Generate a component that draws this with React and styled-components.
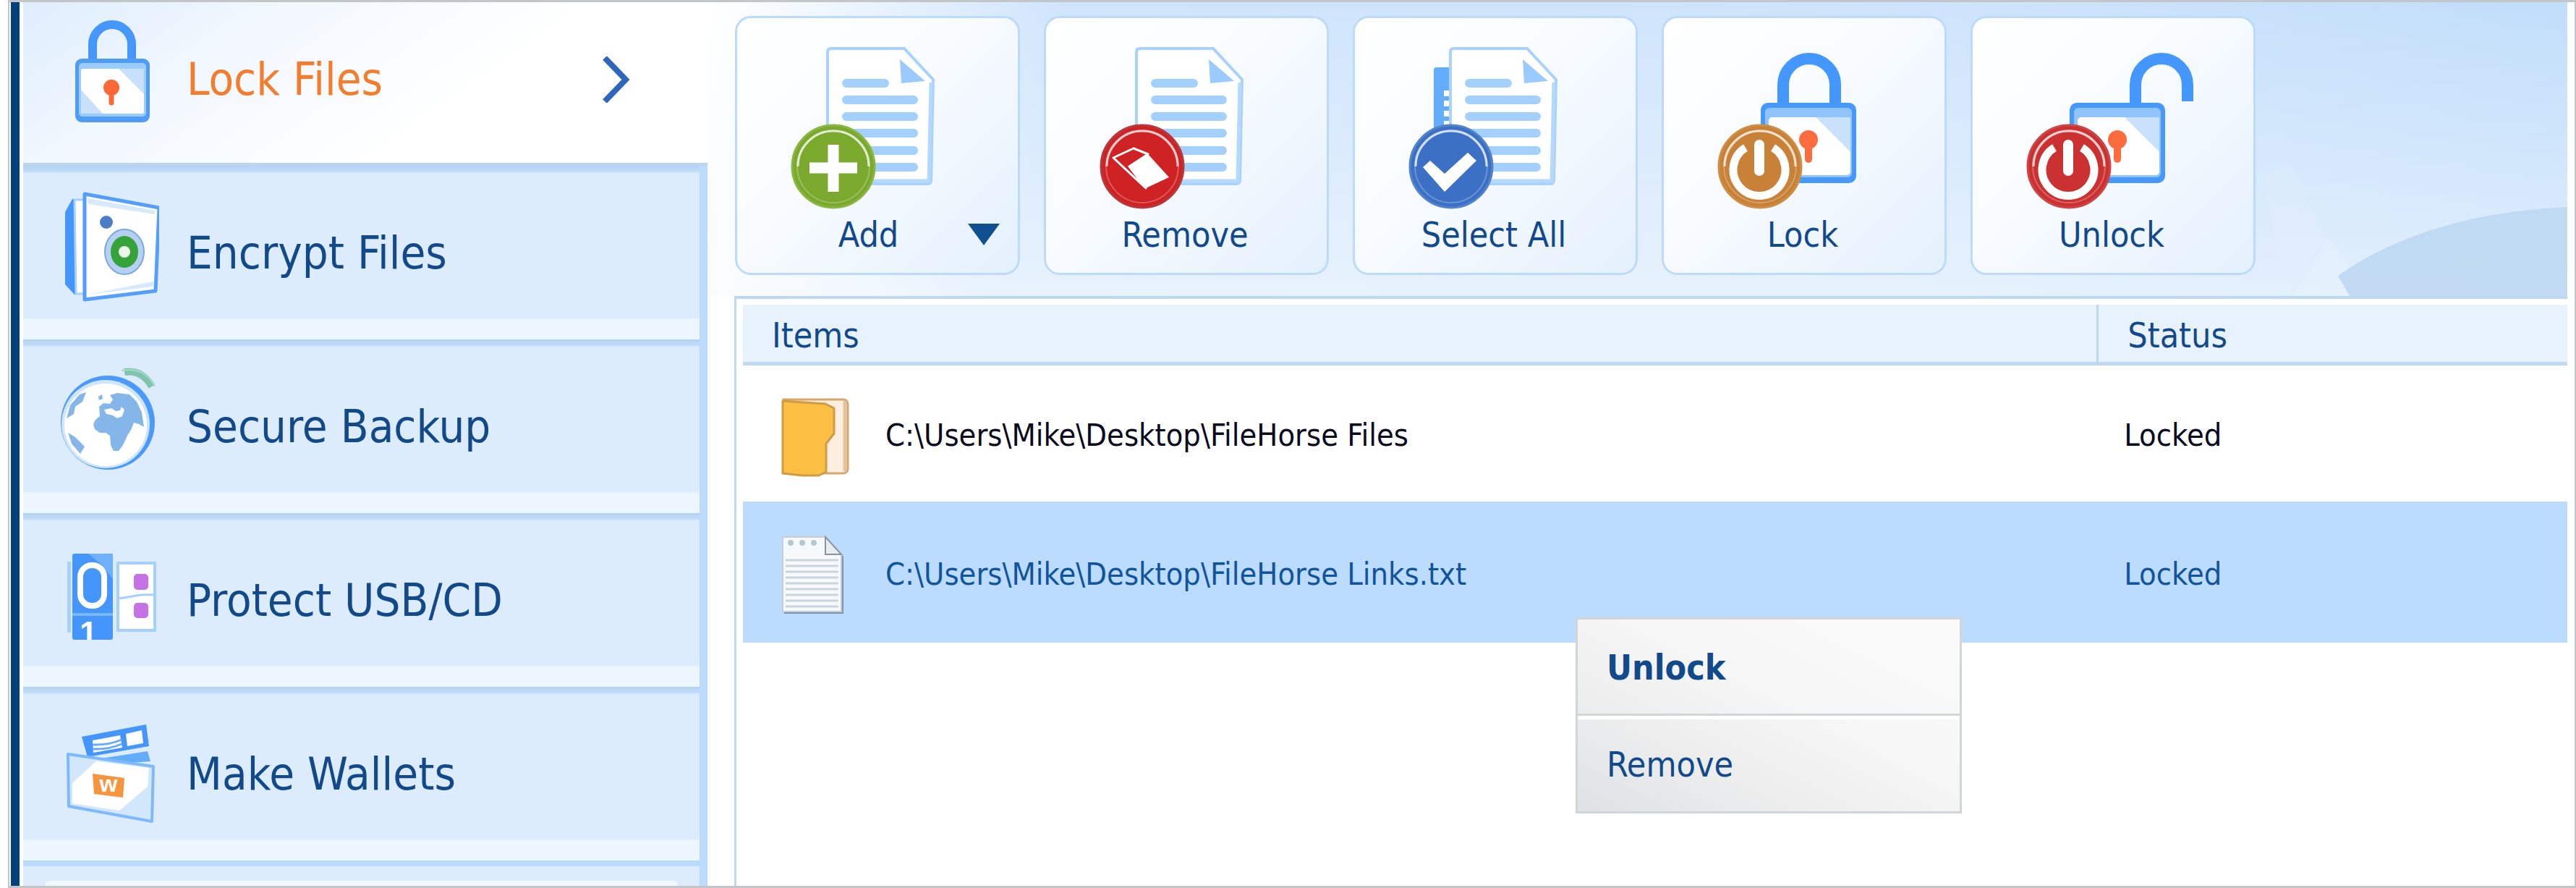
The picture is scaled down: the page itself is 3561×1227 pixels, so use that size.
import React, { useState } from "react";
import styled, { createGlobalStyle, css } from "styled-components";

const navItems = [
  { id: "lock", label: "Lock Files" },
  { id: "encrypt", label: "Encrypt Files" },
  { id: "backup", label: "Secure Backup" },
  { id: "usb", label: "Protect USB/CD" },
  { id: "wallets", label: "Make Wallets" },
];

const tools = [
  { id: "add", label: "Add", hasMenu: true },
  { id: "remove", label: "Remove" },
  { id: "selectAll", label: "Select All" },
  { id: "lock", label: "Lock" },
  { id: "unlock", label: "Unlock" },
];

const files = [
  {
    id: 1,
    type: "folder",
    path: "C:\\Users\\Mike\\Desktop\\FileHorse Files",
    status: "Locked",
  },
  {
    id: 2,
    type: "text",
    path: "C:\\Users\\Mike\\Desktop\\FileHorse Links.txt",
    status: "Locked",
  },
];

//icons of the side menu
const PadlockIcon = () => (
  <NavSvg viewBox="0 0 140 160" aria-hidden="true">
    <path
      d="M48 66 V41 a27 27 0 0 1 54 0 V66"
      fill="none"
      stroke="#4697fb"
      strokeWidth="12"
    />
    <rect x="24" y="61" width="103" height="88" rx="9" fill="#4f9cf6" />
    <rect x="29" y="67" width="93" height="74" rx="5" fill="#9accfb" />
    <rect x="32" y="75" width="87" height="62" rx="3" fill="#fff" />
    <path d="M84 75 H119 V110 Z M32 104 L62 137 H32 Z" fill="#c8e0fa" />
    <circle cx="74" cy="101" r="11" fill="#fd6637" />
    <path d="M74 104 V122" stroke="#fd6637" strokeWidth="7" strokeLinecap="round" />
  </NavSvg>
);

const SafeIcon = () => (
  <NavSvg viewBox="0 0 140 160" aria-hidden="true">
    <path d="M20 15 L10 33 V133 L23 147 H36 V15 Z" fill="#4496fc" />
    <path d="M23 16 H36 V146 H25 Z" fill="#fff" stroke="#a5d1fc" strokeWidth="3" />
    <path
      d="M37 8 L140 27 L135 142 L37 154 Z"
      fill="#fff"
      stroke="#559ffb"
      strokeWidth="5"
      strokeLinejoin="round"
    />
    <path d="M41 14 L134 31 V36 L42 22 Z M41 147 L132 136 V129 Z" fill="#d6e9fd" />
    <circle cx="67" cy="47" r="9" fill="#4d7cc6" />
    <ellipse cx="92" cy="88" rx="27" ry="31" fill="#b4d0f3" stroke="#7ea8dc" strokeWidth="2" />
    <ellipse cx="92" cy="88" rx="19" ry="22" fill="#36a23a" />
    <circle cx="92" cy="88" r="8" fill="#eef6ea" />
  </NavSvg>
);

const GlobeIcon = () => (
  <NavSvg viewBox="0 0 140 160" aria-hidden="true">
    <circle cx="69" cy="84" r="65" fill="#4a99fc" />
    <circle cx="66" cy="86" r="61" fill="#cfe5fd" />
    <circle cx="66" cy="87" r="57" fill="#fff" />
    <path
      d="M57 62 L63 57 L72 58 L76 52 L72 46 L82 43 L99 45 L109 55 L116 70 L119 90 L112 86 L105 84 L101 94 L96 102 L90 115 L84 123 L77 123 L73 115 L72 102 L66 98 L58 98 L51 93 L49 86 L52 80 L58 75 Z"
      fill="#84b6ea"
    />
    <path d="M64 66 L74 64 L80 68 L86 67 L88 62 L92 66 L89 75 L82 78 L76 74 L67 72 Z" fill="#fff" />
    <path d="M56 48 l5 -3 l1 6 l-5 2 Z" fill="#84b6ea" />
    <path
      d="M39 42 L30 45 L17 60 L12 78 L22 72 L24 62 L34 55 Z M14 98 L24 104 L37 117 L31 127 L19 113 Z"
      fill="#84b6ea"
    />
    <path d="M92 14 Q116 10 130 34" fill="none" stroke="#7fc4ac" strokeWidth="10" />
    <path d="M88 12 Q120 6 134 34" fill="none" stroke="#a8dac8" strokeWidth="2" />
  </NavSvg>
);

const UsbIcon = () => (
  <NavSvg viewBox="0 0 140 160" aria-hidden="true">
    <rect x="13" y="36" width="5" height="98" fill="#a5d1fc" />
    <rect x="83" y="38" width="51" height="93" fill="#fff" stroke="#a5d1fc" strokeWidth="4" />
    <path d="M84 87 Q98 85 108 83 T134 82" fill="none" stroke="#a5d1fc" strokeWidth="3" />
    <rect x="105" y="53" width="20" height="22" rx="5" fill="#c472e6" />
    <rect x="105" y="93" width="20" height="21" rx="5" fill="#c472e6" />
    <rect x="20" y="25" width="56" height="119" rx="3" fill="#4496fc" />
    <path d="M42 25 H76 V60 L60 40 Z" fill="#6fb0fb" />
    <rect x="31" y="41" width="33" height="56" rx="16" fill="#4496fc" stroke="#fff" strokeWidth="8" />
    <path d="M20 109 H76" stroke="#7ab8fc" strokeWidth="4" />
    <svg x="20" y="112" width="56" height="32">
      <text x="10" y="38" fontFamily="Liberation Sans" fontWeight="bold" fontSize="44" fill="#fff">
        1
      </text>
    </svg>
  </NavSvg>
);

const WalletIcon = () => (
  <NavSvg viewBox="0 0 140 160" aria-hidden="true">
    <path d="M60 68 L124 58 L128 72 L100 74 Z" fill="#62adfb" />
    <path d="M33 38 L122 21 L126 51 L41 66 Z" fill="#4496fc" />
    <path d="M48 43 L86 36 L89 53 L49 60 Z" fill="#fff" />
    <path d="M48 49 Q70 50 88 42 M48 55 Q70 56 88 48" fill="none" stroke="#66abfb" strokeWidth="3" />
    <path d="M94 34 L116 29 L118 47 L96 51 Z" fill="#fff" />
    <path
      d="M14 62 L132 79 L130 155 L15 134 Z"
      fill="#d3e7fc"
      stroke="#7db9fb"
      strokeWidth="4"
      strokeLinejoin="round"
    />
    <path d="M53 72 L126 81 L124 107 L85 140 L20 130 V102 Z" fill="#fff" />
    <path d="M48 89 L92 95 L90 122 L50 117 Z" fill="#f6953f" />
    <text
      x="70"
      y="114"
      fontFamily="Liberation Sans"
      fontWeight="bold"
      fontSize="32"
      textAnchor="middle"
      fill="#fff"
    >
      w
    </text>
  </NavSvg>
);

const navIcons = {
  lock: PadlockIcon,
  encrypt: SafeIcon,
  backup: GlobeIcon,
  usb: UsbIcon,
  wallets: WalletIcon,
};

//round badge in the corner of the toolbar icons
const Badge = ({ color, rim, children }) => (
  <g>
    <circle cx="136" cy="208" r="58" fill={color} />
    <circle cx="136" cy="208" r="57" fill="none" stroke={rim} strokeWidth="3" />
    <path
      d="M87 208 a49 49 0 0 1 98 0"
      fill="none"
      stroke="#fff"
      strokeOpacity="0.75"
      strokeWidth="3"
    />
    <circle cx="136" cy="208" r="50" fill="none" stroke="#fff" strokeOpacity="0.25" strokeWidth="2" />
    {children}
  </g>
);

const PowerSign = () => (
  <g fill="none" stroke="#fff">
    <path d="M116 182 A36 36 0 1 0 154 182" strokeWidth="11" />
    <path d="M135 178 V214" strokeWidth="14" strokeLinecap="round" />
  </g>
);

const Doc = () => (
  <g>
    <path
      d="M133 45 H234 L274 88 L271 227 Q271 232 266 232 H128 V50 Q128 45 133 45 Z"
      fill="#fff"
      stroke="#a8d2fd"
      strokeWidth="4"
    />
    <path d="M271 92 L268 228 H130" fill="none" stroke="#b5d9fd" strokeWidth="5" />
    <path d="M228 60 L263 90 L230 93 Z" fill="#9bcbfc" />
    <path
      d="M154 93 H207 M154 116 H247 M154 139 H247 M154 162 H247 M154 186 H247 M154 209 H247"
      stroke="#a3d0fe"
      strokeWidth="12"
      strokeLinecap="round"
    />
  </g>
);

const LockBody = () => (
  <g>
    <rect x="137" y="120" width="132" height="111" rx="10" fill="#4798fb" />
    <rect x="143" y="127" width="120" height="96" rx="6" fill="#8fc3f9" />
    <rect x="148" y="140" width="113" height="80" rx="5" fill="#fff" />
    <path d="M213 140 H261 V188 Z" fill="#c9e1fb" />
    <circle cx="203" cy="171" r="13" fill="#fe6c3d" />
    <path d="M203 176 V198" stroke="#fe6c3d" strokeWidth="10" strokeLinecap="round" />
  </g>
);

const toolIcons = {
  add: (
    <>
      <Doc />
      <Badge color="#7ba92e" rim="#8ab642">
        <path d="M136 178 V243 M103 210 H169" stroke="#fff" strokeWidth="15" />
      </Badge>
    </>
  ),
  remove: (
    <>
      <Doc />
      <Badge color="#cf2225" rim="#b8393c">
        <path
          d="M96 196 L124 183 L144 191 L118 208 L141 238 Z"
          fill="none"
          stroke="#fff"
          strokeWidth="3"
          strokeLinejoin="round"
        />
        <path d="M144 191 L173 223 L141 238 L118 208 Z" fill="#fff" />
      </Badge>
    </>
  ),
  selectAll: (
    <>
      <rect x="112" y="71" width="30" height="130" rx="4" fill="#63adfd" />
      <path d="M130 103 V180" stroke="#fff" strokeWidth="8" strokeDasharray="8 6" />
      <g transform="translate(7 0)">
        <Doc />
      </g>
      <Badge color="#3b70c5" rim="#5583c9">
        <path d="M97 209 L107 200 L127 218 L159 189 L171 200 L127 243 Z" fill="#fff" />
      </Badge>
    </>
  ),
  lock: (
    <>
      <path
        d="M168 124 V95 a36 36 0 0 1 72 0 V124"
        fill="none"
        stroke="#4497fe"
        strokeWidth="16"
      />
      <LockBody />
      <Badge color="#c88136" rim="#cd8f45">
        <PowerSign />
      </Badge>
    </>
  ),
  unlock: (
    <>
      <path
        d="M228 124 V95 a36 36 0 0 1 72 0 V118"
        fill="none"
        stroke="#4497fe"
        strokeWidth="16"
      />
      <LockBody />
      <Badge color="#cc3132" rim="#cd4546">
        <PowerSign />
      </Badge>
    </>
  ),
};

//icons of the file list
const FolderIcon = () => (
  <FileSvg viewBox="0 0 105 120" aria-hidden="true">
    <path
      d="M8 11 H90 Q97 11 97 18 V106 Q97 113 90 113 H8 Z"
      fill="#fdeee0"
      stroke="#d9a66a"
      strokeWidth="3"
    />
    <path d="M93 13 V110" stroke="#e5c3a0" strokeWidth="5" />
    <path
      d="M7 13 L66 17 L78 23 V58 L67 72 V111 L57 116 H34 L7 113 Z"
      fill="#fcbe43"
      stroke="#cf9c45"
      strokeWidth="3"
      strokeLinejoin="round"
    />
  </FileSvg>
);

const NotepadIcon = () => (
  <FileSvg viewBox="0 0 105 120" aria-hidden="true">
    <path d="M9 12 H68 L91 36 V115 H9 Z" fill="#7d93ac" />
    <path d="M7 9 H66 L88 33 V112 H7 Z" fill="#f6f9fc" stroke="#c9ccd2" strokeWidth="2" />
    <path d="M66 9 L88 33 H66 Z" fill="#e9edf1" stroke="#8b939c" strokeWidth="2" />
    <circle cx="18" cy="17" r="4" fill="#b4c6d4" />
    <circle cx="34" cy="17" r="4" fill="#b4c6d4" />
    <circle cx="50" cy="17" r="4" fill="#b4c6d4" />
    <path
      d="M11 41 H84 M11 49 H84 M11 57 H84 M11 65 H84 M11 73 H84 M11 81 H84 M11 89 H84 M11 97 H84 M11 105 H84"
      stroke="#cad5e0"
      strokeWidth="3"
    />
  </FileSvg>
);

const App = () => {
  const [activeNav, setActiveNav] = useState("lock");
  const [selectedFile, setSelectedFile] = useState(2);
  const [menuOpen, setMenuOpen] = useState(true);

  //right click on a row opens the menu for it
  const openMenu = (e, id) => {
    e.preventDefault();
    setSelectedFile(id);
    setMenuOpen(true);
  };

  return (
    <>
      <GlobalStyle />
      <Window>
        <Sidebar>
          {navItems.map(({ id, label }, index) => {
            const Icon = navIcons[id];
            return (
              <NavItem
                key={id}
                $first={index === 0}
                $active={activeNav === id}
                onClick={() => setActiveNav(id)}
              >
                <Icon />
                <NavLabel>
                  {label}
                  {activeNav === id && (
                    <Chevron viewBox="0 0 40 64" aria-hidden="true">
                      <path d="M4 2 L33 32 L4 62" fill="none" stroke="#2d66bb" strokeWidth="8" />
                    </Chevron>
                  )}
                </NavLabel>
              </NavItem>
            );
          })}
          <SidebarTail>
            <TailCard />
          </SidebarTail>
        </Sidebar>
        <Main>
          <Backdrop viewBox="0 0 430 406" aria-hidden="true">
            <path d="M10 236 L50 226 L96 330 L66 362 L30 350 Z" fill="#fff" opacity="0.09" />
            <path d="M50 406 L100 326 L135 372 L128 406 Z" fill="#fff" opacity="0.12" />
            <path d="M113 378 Q235 292 430 283 V406 H129 Z" fill="#bcd7f1" opacity="0.85" />
          </Backdrop>
          <Toolbar>
            {tools.map(({ id, label, hasMenu }) => (
              <ToolButton key={id}>
                <ToolSvg viewBox="3 3 388 269" aria-hidden="true">
                  {toolIcons[id]}
                </ToolSvg>
                <ToolLabel $hasMenu={hasMenu}>
                  <span />
                  <span>{label}</span>
                  {hasMenu && (
                    <Caret viewBox="0 0 44 30" aria-hidden="true">
                      <path d="M0 0 H44 L22 30 Z" fill="#10508f" />
                    </Caret>
                  )}
                </ToolLabel>
              </ToolButton>
            ))}
          </Toolbar>
          <Panel>
            <FileTable>
              <thead>
                <tr>
                  <HeadCell $wide>Items</HeadCell>
                  <HeadCell $divided>Status</HeadCell>
                </tr>
              </thead>
              <tbody>
                {files.map(({ id, type, path, status }) => (
                  <FileRow
                    key={id}
                    $selected={selectedFile === id}
                    onClick={() => setSelectedFile(id)}
                    onContextMenu={(e) => openMenu(e, id)}
                  >
                    <td>
                      <FileName>
                        {type === "folder" ? <FolderIcon /> : <NotepadIcon />}
                        {path}
                      </FileName>
                    </td>
                    <td>{status}</td>
                  </FileRow>
                ))}
              </tbody>
            </FileTable>
            {menuOpen && (
              <ContextMenu>
                <MenuItem $bold onClick={() => setMenuOpen(false)}>
                  Unlock
                </MenuItem>
                <MenuItem onClick={() => setMenuOpen(false)}>Remove</MenuItem>
              </ContextMenu>
            )}
          </Panel>
        </Main>
      </Window>
    </>
  );
};

export default App;

//style Component
const GlobalStyle = createGlobalStyle`
  * {
    box-sizing: border-box;
  }
  body {
    margin: 0;
    background: #fff;
    font-family: "DejaVu Sans Condensed", "DejaVu Sans", sans-serif;
    color: #12498a;
  }
  button {
    font-family: inherit;
    color: inherit;
    cursor: pointer;
  }
`;

const Window = styled.div`
  display: flex;
  min-height: 100vh;
  margin-left: 11px;
  padding: 0 10px 0 2px;
  border: 3px solid #c3c6c9;
  border-width: 3px 2px 3px 2px;
  background: #fff;

  &::before {
    content: "";
    width: 12px;
    margin-right: 5px;
    background: #00407c;
  }
`;

const Sidebar = styled.nav`
  display: flex;
  flex-direction: column;
  flex: 0 0 946px;
  background: linear-gradient(145deg, #deedfd 0, #f1f7fe 200px, #fff 460px);
`;

const NavItem = styled.button`
  display: flex;
  align-items: center;
  gap: 38px;
  height: 240px;
  padding: 0 0 0 48px;
  border: solid #badbfd;
  border-width: 0 11px 0 0;
  background: linear-gradient(
    #b4d2f0 0,
    #bfdcfb 8px,
    #d8e9fc 10px,
    #ddecfd 12px,
    #ddecfd 211px,
    #edf5fe 212px
  );
  padding-top: 10px;
  padding-bottom: 28px;
  text-align: left;

  ${({ $first }) =>
    $first &&
    css`
      height: 226px;
      padding-top: 0;
      border-width: 0 0 4px 0;
      border-color: #b8d6f3;
    `}
  ${({ $active }) =>
    $active &&
    css`
      background: none;
      color: #f47d2d;
    `}
`;

const NavSvg = styled.svg`
  flex: none;
  width: 140px;
  height: 160px;
`;

const NavLabel = styled.span`
  display: flex;
  flex: 1;
  align-items: center;
  justify-content: space-between;
  padding-top: 20px;
  font-size: 63px;
  line-height: 72px;
`;

const Chevron = styled.svg`
  width: 40px;
  height: 64px;
  margin-right: 106px;
`;

const SidebarTail = styled.div`
  flex: 1;
  padding: 28px 30px 0;
  border-right: 11px solid #badbfd;
  background: linear-gradient(#b9d9fb 0, #badbfd 7px, #ddecfd 9px);
  overflow: hidden;
`;

const TailCard = styled.div`
  height: 100%;
  border-radius: 24px 24px 0 0;
  background: #f2f8ff;
`;

const Main = styled.main`
  position: relative;
  display: flex;
  flex-direction: column;
  flex: 1;
  min-width: 0;
  padding-left: 37px;
  background: linear-gradient(rgba(255, 255, 255, 0) 0, rgba(255, 255, 255, 0.5) 406px, #fff 407px),
    linear-gradient(100deg, #fff 0, #d0e5fc 480px, #cfe4fc 60%, #bedcfa 100%);
`;

const Backdrop = styled.svg`
  position: absolute;
  top: 0;
  right: 0;
  width: 430px;
  height: 406px;
`;

const Toolbar = styled.div`
  position: relative;
  display: flex;
  gap: 33px;
  padding: 19px 0 29px 1px;
`;

const ToolButton = styled.button`
  display: flex;
  flex-direction: column;
  width: 394px;
  height: 358px;
  padding: 0;
  border: 3px solid #bcdafa;
  border-radius: 22px;
  background: linear-gradient(135deg, #fff 0, #f9fcff 40%, #e4f0fd 100%);
`;

const ToolSvg = styled.svg`
  width: 388px;
  height: 269px;
`;

const ToolLabel = styled.span`
  display: grid;
  grid-template-columns: 1fr auto 1fr;
  align-items: center;
  width: 100%;
  padding-right: ${({ $hasMenu }) => ($hasMenu ? "25px" : "4px")};
  font-size: 48px;
  line-height: 60px;
`;

const Caret = styled.svg`
  justify-self: end;
  width: 44px;
  height: 30px;
`;

const Panel = styled.section`
  position: relative;
  flex: 1;
  padding: 8px 0 0 9px;
  border: solid #bcd8f3;
  border-width: 4px 0 0 3px;
  background: #fff;
`;

const FileTable = styled.table`
  width: 100%;
  border-collapse: separate;
  border-spacing: 0;
  table-layout: fixed;
`;

const HeadCell = styled.th`
  width: ${({ $wide }) => ($wide ? "74.2%" : "auto")};
  height: 84px;
  padding: 4px 0 0 40px;
  border-bottom: 5px solid #bcd8f3;
  background: #e7f2fd;
  font-size: 48px;
  font-weight: normal;
  line-height: 60px;
  text-align: left;

  ${({ $divided }) =>
    $divided &&
    css`
      border-left: 3px solid #bcd8f3;
    `}
`;

const FileRow = styled.tr`
  background: ${({ $selected }) => ($selected ? "#bbdbff" : "#fff")};
  color: ${({ $selected }) => ($selected ? "#12549c" : "#0a0a1e")};

  td {
    height: ${({ $selected }) => ($selected ? "195px" : "188px")};
    padding: 4px 0 0 38px;
    font-size: 43px;
    line-height: 56px;
  }

  td:first-child {
    padding-left: 48px;
  }
`;

const FileName = styled.span`
  display: flex;
  align-items: center;
  gap: 44px;
`;

const FileSvg = styled.svg`
  flex: none;
  width: 105px;
  height: 120px;
`;

const ContextMenu = styled.div`
  position: absolute;
  top: 440px;
  left: 1160px;
  width: 534px;
  border: 3px solid #d2d5d7;
  background: linear-gradient(to top right, #dde2e6 0, #ededed 30%, #f7f7f7 60%, #fafafa 100%);
`;

const MenuItem = styled.button`
  display: block;
  width: 100%;
  height: 130px;
  padding: 2px 0 0 40px;
  border: none;
  background: none;
  font-size: 48px;
  font-weight: ${({ $bold }) => ($bold ? "bold" : "normal")};
  line-height: 60px;
  text-align: left;

  & + & {
    height: 135px;
    border-top: 3px solid #d2d5d7;
    box-shadow: inset 0 5px 0 #fff;
  }
`;
